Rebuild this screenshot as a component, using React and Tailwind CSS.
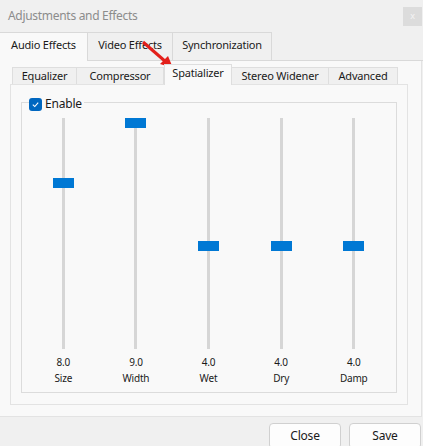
import { useState } from "react";

const sliders = [
  { label: "Size", value: "8.0", top: 60 },
  { label: "Width", value: "9.0", top: 0 },
  { label: "Wet", value: "4.0", top: 123 },
  { label: "Dry", value: "4.0", top: 123 },
  { label: "Damp", value: "4.0", top: 123 },
];

const outerTabs = [
  { name: "Audio Effects", w: "w-[88px]" },
  { name: "Video Effects", w: "w-[85px]" },
  { name: "Synchronization", w: "w-[99px]" },
];

const innerTabs = [
  { name: "Equalizer", w: "w-[65px]" },
  { name: "Compressor", w: "w-[87px]" },
  { name: "Spatializer", w: "w-[68px]" },
  { name: "Stereo Widener", w: "w-[97px]" },
  { name: "Advanced", w: "w-[69px]" },
];

function App() {
  const [outer, setOuter] = useState(0);
  const [inner, setInner] = useState(2);
  const [enabled, setEnabled] = useState(true);

  return (
    <div className="relative w-[423px] h-[446px] overflow-hidden bg-[#f0f0f0] text-[11px] tracking-[-0.2px] text-[#1a1a1a] font-['Noto_Sans',sans-serif]">
      {/* Title bar */}
      <div className="h-[32px] flex items-center justify-between pl-[8px] pr-[1px]">
        <span className="text-[12px] tracking-[-0.3px] text-[#8c8c8c]">Adjustments and Effects</span>
        <div className="w-[19px] h-[19px] bg-[#dcdcdc] flex items-center justify-center text-[9px] text-[#f4f4f4]">
          x
        </div>
      </div>

      {/* Outer tabs */}
      <div className="flex h-[29px]">
        {outerTabs.map((t, i) => (
          <button
            key={t.name}
            onClick={() => setOuter(i)}
            className={`${t.w} h-full flex justify-center pt-[4px] border-[#d9d9d9] ${
              i === outer
                ? "bg-[#f9f9f9] border-t border-r"
                : "bg-[#f0f0f0] border-t border-r border-b"
            }`}
          >
            {t.name}
          </button>
        ))}
        <div className="flex-1 border-b border-[#d9d9d9]" />
      </div>

      {/* Outer panel */}
      <div className="h-[356px] w-[422px] bg-[#f9f9f9] border-r border-b border-[#e3e3e3] pl-[10px] pt-[2px]">
        {/* Inner tabs */}
        <div className="flex items-end h-[21px] ml-[2px]">
          {innerTabs.map((t, i) => (
            <button
              key={t.name}
              onClick={() => setInner(i)}
              className={`${t.w} flex items-center justify-center border-[#dedede] ${
                i === inner
                  ? "h-[21px] bg-[#f9f9f9] border-t border-r border-l -mb-px relative z-10 pb-[3px]"
                  : "h-[17px] bg-[#f0f0f0] border-t border-r " + (i === 0 ? "border-l" : "")
              }`}
            >
              {t.name}
            </button>
          ))}
        </div>

        {/* Inner panel */}
        <div className="w-[398px] h-[321px] border border-[#e3e3e3] bg-[#f9f9f9] px-[10px] pt-[17px]">
          {/* Group box */}
          <div className="relative h-[291px] border border-[#dcdcdc] pl-[5px] pr-[6px]">
            <label className="absolute -top-[8px] left-[7px] flex items-center gap-[3px] bg-[#f9f9f9] pr-[2px]">
              <button
                onClick={() => setEnabled(!enabled)}
                className={`w-[13px] h-[13px] rounded-[3px] flex items-center justify-center ${
                  enabled ? "bg-[#0067c0]" : "bg-white border border-[#888]"
                }`}
              >
                {enabled && (
                  <svg width="9" height="9" viewBox="0 0 10 10">
                    <path d="M2 5.2 L4.2 7.3 L8 3" fill="none" stroke="white" strokeWidth="1.2" />
                  </svg>
                )}
              </button>
              <span className="text-[12px]">Enable</span>
            </label>

            <div className="grid grid-cols-5 pt-[15px]">
              {sliders.map((s) => (
                <div key={s.label} className="flex flex-col items-center">
                  <div className="relative w-[21px] h-[231px] flex justify-center">
                    <div className="w-[3px] h-full bg-[#d6d6d6]" />
                    <div
                      className="absolute left-0 w-[21px] h-[10px] bg-[#0078d4]"
                      style={{ top: s.top }}
                    />
                  </div>
                  <div className="mt-[6px] text-[10px] leading-[14px]">{s.value}</div>
                  <div className="mt-[2px] text-[10px] leading-[14px]">{s.label}</div>
                </div>
              ))}
            </div>
          </div>
        </div>
      </div>

      {/* Buttons */}
      <div className="flex justify-end gap-[8px] pr-[2px] pt-[6px]">
        <button className="w-[72px] h-[26px] bg-[#fdfdfd] border border-[#d0d0d0] rounded-[4px] text-[12px]">Close</button>
        <button className="w-[72px] h-[26px] bg-[#fdfdfd] border border-[#d0d0d0] rounded-[4px] text-[12px]">Save</button>
      </div>

      {/* Red arrow annotation */}
      <svg className="absolute left-0 top-0 pointer-events-none" width="423" height="446">
        <line x1="143" y1="42" x2="166" y2="62" stroke="#e3201b" strokeWidth="3" />
        <polygon points="173,68 160,64 168,56" fill="#e3201b" />
      </svg>
    </div>
  );
}

export default App;
